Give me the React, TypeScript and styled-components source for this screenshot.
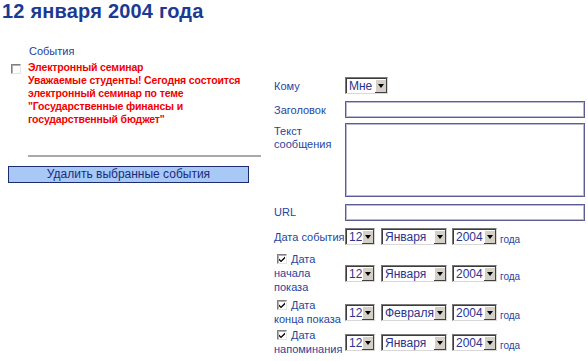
import React from 'react';
import styled, { createGlobalStyle } from 'styled-components';

const GlobalStyle = createGlobalStyle`
    body {
        margin: 0;
        background: #ffffff;
        font-family: "Liberation Sans", Arial, sans-serif;
    }
`;

const Page = styled.div`
    width: 588px;
    height: 361px;
    overflow: hidden;
`;

const Title = styled.h1`
    margin: 0;
    padding-left: 2px;
    font-size: 20px;
    line-height: 22px;
    font-weight: bold;
    letter-spacing: 0.2px;
    color: #1b3a92;
`;

const Columns = styled.div`
    display: flex;
    align-items: flex-start;
`;

const LeftColumn = styled.div`
    width: 274px;
    flex-shrink: 0;
    padding-top: 23px;
`;

const EventsHeading = styled.div`
    margin-left: 29px;
    font-size: 11px;
    line-height: 13px;
    color: #24409a;
`;

const EventItem = styled.div`
    display: flex;
    align-items: flex-start;
    margin-top: 3px;
`;

const Check = styled.span`
    display: flex;
    align-items: center;
    justify-content: center;
    box-sizing: border-box;
    width: 10px;
    height: 10px;
    background: #ffffff;
    border-top: 1px solid #808080;
    border-left: 1px solid #808080;
    border-bottom: 1px solid #e4e4e4;
    border-right: 1px solid #e4e4e4;
    box-shadow: inset 1px 1px 0 #b0b0b0;
    flex-shrink: 0;
`;

const EventCheck = styled.div`
    margin: 3px 7px 0 11px;
`;

const EventText = styled.div`
    font-size: 10.5px;
    line-height: 13px;
    font-weight: bold;
    letter-spacing: -0.15px;
    color: #f20000;
    white-space: nowrap;
`;

const Divider = styled.div`
    margin: 29px 0 0 28px;
    width: 233px;
    height: 2px;
    background: #a9a9a9;
`;

const DeleteButton = styled.button`
    display: block;
    margin: 9px 0 0 8px;
    width: 241px;
    height: 17px;
    padding: 0;
    box-sizing: border-box;
    border: 1px solid #1d2c6c;
    background: #a8c8f6;
    color: #1b2a7e;
    font-family: "Liberation Sans", Arial, sans-serif;
    font-size: 12px;
    line-height: 15px;
`;

const Form = styled.div`
    padding-top: 52px;
    width: 311px;
`;

const FormRow = styled.div<{ $h: number }>`
    display: grid;
    grid-template-columns: 71px 240px;
    align-items: center;
    height: ${(p) => p.$h}px;
`;

const Label = styled.div<{ $top?: boolean }>`
    font-size: 11px;
    line-height: ${(p) => (p.$top ? '13px' : '14px')};
    color: #2545a0;
    white-space: nowrap;
    align-self: ${(p) => (p.$top ? 'start' : 'center')};
    padding-top: ${(p) => (p.$top ? '3px' : '0')};
`;

const CheckLine = styled.span`
    display: inline-flex;
    align-items: center;
    gap: 4px;
    margin-left: 3px;
`;

const TextField = styled.div<{ $h: number }>`
    box-sizing: border-box;
    width: 240px;
    height: ${(p) => p.$h}px;
    background: #ffffff;
    border: 1px solid #5d5d93;
    box-shadow: inset 0 0 0 1px #b9b9d3;
    align-self: ${(p) => (p.$h > 30 ? 'start' : 'center')};
    margin-top: ${(p) => (p.$h > 30 ? '1px' : '0')};
`;

const DateControls = styled.div`
    display: flex;
    align-items: flex-end;
`;

const SelectBox = styled.div<{ $w: number; $gap: number }>`
    display: flex;
    box-sizing: border-box;
    width: ${(p) => p.$w}px;
    height: 17px;
    margin-right: ${(p) => p.$gap}px;
    background: #ffffff;
    border-top: 1px solid #7a7a7a;
    border-left: 1px solid #7a7a7a;
    border-bottom: 1px solid #d8d8d8;
    border-right: 1px solid #d8d8d8;
    box-shadow: inset 1px 1px 0 #3c3c3c;
`;

const SelectValue = styled.span`
    flex: 1;
    padding: 1px 0 0 3px;
    font-size: 12px;
    line-height: 14px;
    color: #2d3390;
    white-space: nowrap;
`;

const SelectArrow = styled.span`
    display: flex;
    align-items: center;
    justify-content: center;
    width: 12px;
    flex-shrink: 0;
    margin: 1px 0 0 0;
    background: #d4d0c8;
    box-shadow: inset -1px -1px 0 #404040, inset 1px 1px 0 #ffffff;
    &::after {
        content: '';
        border-left: 3px solid transparent;
        border-right: 3px solid transparent;
        border-top: 4px solid #000000;
    }
`;

const Suffix = styled.span`
    font-size: 10px;
    line-height: 11px;
    color: #2545a0;
`;

const CheckMark = () => (
    <svg width="8" height="8" viewBox="0 0 8 8">
        <path d="M1 3.5 L3 5.5 L7 1.5 L7 3.5 L3 7.2 L1 5.2 Z" fill="#000" />
    </svg>
);

const Select = ({ w, gap = 0, value }: { w: number; gap?: number; value: string }) => (
    <SelectBox $w={w} $gap={gap}>
        <SelectValue>{value}</SelectValue>
        <SelectArrow />
    </SelectBox>
);

const DateRow = ({ month }: { month: string }) => (
    <DateControls>
        <Select w={30} gap={6} value="12" />
        <Select w={66} gap={5} value={month} />
        <Select w={45} gap={3} value="2004" />
        <Suffix>года</Suffix>
    </DateControls>
);

const CheckedLabel = ({ lines }: { lines: string[] }) => (
    <Label>
        <CheckLine>
            <Check>
                <CheckMark />
            </Check>
            Дата
        </CheckLine>
        {lines.map((line) => (
            <div key={line}>{line}</div>
        ))}
    </Label>
);

const App = () => {
    return (
        <Page>
            <GlobalStyle />
            <Title>12 января 2004 года</Title>

            <Columns>
                <LeftColumn>
                    <EventsHeading>События</EventsHeading>
                    <EventItem>
                        <EventCheck>
                            <Check />
                        </EventCheck>
                        <EventText>
                            Электронный семинар
                            <br />
                            Уважаемые студенты! Сегодня состоится
                            <br />
                            электронный семинар по теме
                            <br />
                            "Государственные финансы и
                            <br />
                            государственный бюджет"
                        </EventText>
                    </EventItem>
                    <Divider />
                    <DeleteButton>Удалить выбранные события</DeleteButton>
                </LeftColumn>

                <Form>
                    <FormRow $h={23}>
                        <Label>Кому</Label>
                        <Select w={43} value="Мне" />
                    </FormRow>
                    <FormRow $h={25}>
                        <Label>Заголовок</Label>
                        <TextField $h={17} />
                    </FormRow>
                    <FormRow $h={77}>
                        <Label $top>
                            Текст
                            <br />
                            сообщения
                        </Label>
                        <TextField $h={74} />
                    </FormRow>
                    <FormRow $h={26}>
                        <Label>URL</Label>
                        <TextField $h={17} />
                    </FormRow>
                    <FormRow $h={23}>
                        <Label>Дата события</Label>
                        <DateRow month="Января" />
                    </FormRow>
                    <FormRow $h={50}>
                        <CheckedLabel lines={['начала', 'показа']} />
                        <DateRow month="Января" />
                    </FormRow>
                    <FormRow $h={28}>
                        <CheckedLabel lines={['конца показа']} />
                        <DateRow month="Февраля" />
                    </FormRow>
                    <FormRow $h={32}>
                        <CheckedLabel lines={['напоминания']} />
                        <DateRow month="Января" />
                    </FormRow>
                </Form>
            </Columns>
        </Page>
    );
};

export default App;
